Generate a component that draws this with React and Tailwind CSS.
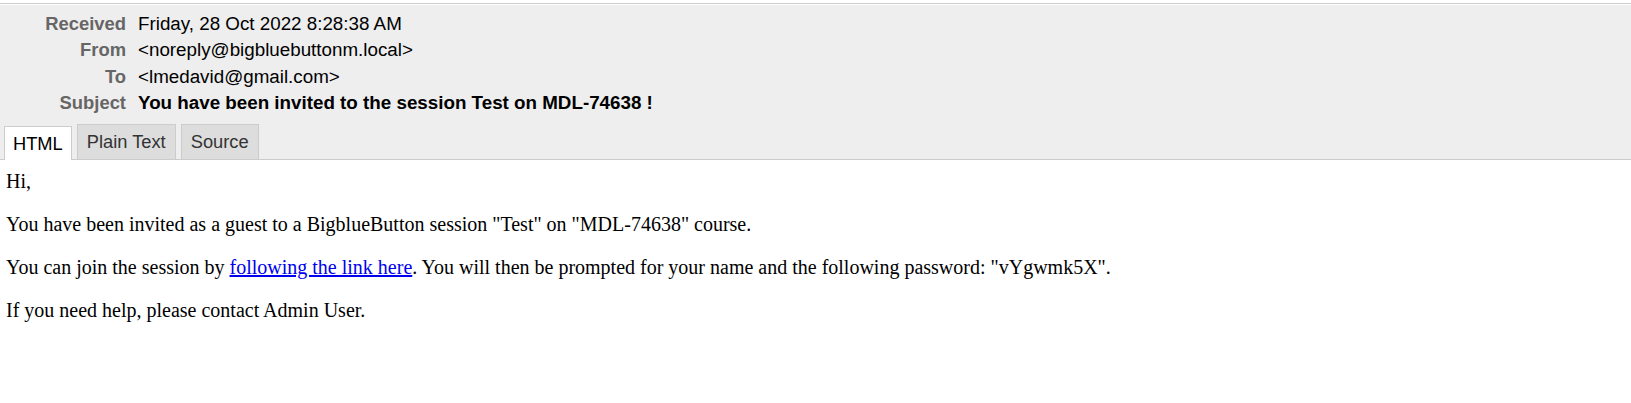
import React, { useState } from 'react';

const headers = [
  { label: 'Received', value: 'Friday, 28 Oct 2022 8:28:38 AM' },
  { label: 'From', value: '<noreply@bigbluebuttonm.local>' },
  { label: 'To', value: '<lmedavid@gmail.com>' },
  { label: 'Subject', value: 'You have been invited to the session Test on MDL-74638 !', bold: true },
];

const tabs = ['HTML', 'Plain Text', 'Source'];

function App() {
  const [activeTab, setActiveTab] = useState('HTML');

  return (
    <div className="min-h-screen bg-white pt-[3px]">
      <div className="border-t border-[#cccccc]">
        {/* message headers */}
        <div className="mt-px bg-[#eeeeee] border-b border-[#cccccc] font-['Liberation_Sans',Arial,sans-serif]">
          <div className="grid grid-cols-[126px_1fr] gap-x-[12px] pt-[6px]">
            {headers.map((h) => (
              <React.Fragment key={h.label}>
                <div className="h-[26.3px] leading-[26.3px] text-right text-[18.4px] font-bold text-[#666666]">{h.label}</div>
                <div className={`h-[26.3px] leading-[26.3px] text-[18.8px] text-black ${h.bold ? 'font-bold' : ''}`}>{h.value}</div>
              </React.Fragment>
            ))}
          </div>

          {/* tabs */}
          <div className="flex items-end gap-[5px] pl-[4px] mt-[8px] h-[35px] text-[18.3px]">
            {tabs.map((t) =>
              t === activeTab ? (
                <button
                  key={t}
                  onClick={() => setActiveTab(t)}
                  className="h-[34px] -mb-px px-[8px] bg-white border border-b-0 border-[#cccccc] text-black leading-none"
                >
                  {t}
                </button>
              ) : (
                <button
                  key={t}
                  onClick={() => setActiveTab(t)}
                  className="h-[35px] px-[9px] bg-[#dddddd] border border-b-0 border-[#cccccc] text-[#333333] leading-none"
                >
                  {t}
                </button>
              )
            )}
          </div>
        </div>

        {/* message body */}
        <div className="px-[6px] pt-[10px] font-['Liberation_Serif','Times_New_Roman',serif] text-[20px] leading-[1.15] text-black">
          <p className="mb-[20px]">Hi,</p>
          <p className="mb-[20px]">
            You have been invited as a guest to a BigblueButton session "Test" on "MDL-74638" course.
          </p>
          <p className="mb-[20px]">
            You can join the session by{' '}
            <a href="#" className="text-[#0000ee] underline">following the link here</a>
            . You will then be prompted for your name and the following password: "vYgwmk5X".
          </p>
          <p className="mb-[20px]">If you need help, please contact Admin User.</p>
        </div>
      </div>
    </div>
  );
}

export default App;
